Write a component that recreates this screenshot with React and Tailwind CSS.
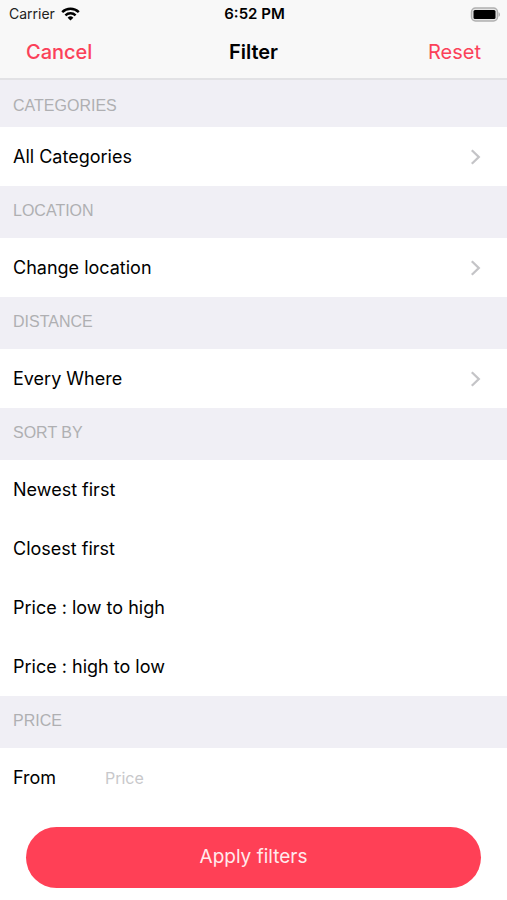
import { useState } from "react";
import { clsx } from "clsx";

const sortOptions = [
  "Newest first",
  "Closest first",
  "Price : low to high",
  "Price : high to low",
];

function StatusBar() {
  return (
    <div className="grid grid-cols-3 items-center h-7 pl-[9px] pr-[7px] text-sm text-[#222]">
      <div className="flex items-center gap-[6px]">
        <span>Carrier</span>
        <svg width="19" height="14" viewBox="0 0 19 14" fill="none" stroke="#000">
          <path d="M1.2 5.1a11.9 11.9 0 0 1 16.6 0" strokeWidth="2.5" />
          <path d="M4.4 8.3a7.3 7.3 0 0 1 10.2 0" strokeWidth="2.4" />
          <path d="M9.5 13.6 6.6 10.7a4.1 4.1 0 0 1 5.8 0z" fill="#000" stroke="none" />
        </svg>
      </div>
      <span className="text-center text-[15px] font-semibold text-black">
        6:52 PM
      </span>
      <svg className="justify-self-end" width="30" height="15" viewBox="0 0 30 15">
        <rect x="1.5" y="1" width="26" height="13" rx="4" fill="#e4e4e4" stroke="#b0b0b0" strokeWidth="1.5" />
        <rect x="3.5" y="3" width="22" height="9" rx="1.5" fill="#000" />
        <path d="M28.6 5.2c1.7.7 1.7 3.9 0 4.6z" fill="#a8a8a8" />
      </svg>
    </div>
  );
}

function SectionHeader({ title, first }) {
  return (
    <h2
      className={clsx(
        "flex items-center px-[13px] bg-[#f0eff5] text-base leading-6 text-[#afafb2]",
        "font-['Liberation_Sans',Arial,sans-serif]",
        first ? "h-[47px] pt-1" : "h-[52px] pb-[2px]"
      )}
    >
      {title}
    </h2>
  );
}

function LinkRow({ label }) {
  return (
    <button
      type="button"
      className="flex w-full items-center justify-between h-[59px] pl-[13px] pr-[26px] text-left text-lg"
    >
      {label}
      <svg width="11" height="16" viewBox="0 0 11 16" fill="none" stroke="#c4c4c7" strokeWidth="2.3">
        <path d="M1.8 1.2 8.8 8l-7 6.8" />
      </svg>
    </button>
  );
}

export default function App() {
  const [sort, setSort] = useState("");
  const [price, setPrice] = useState("");

  const handleReset = () => {
    setSort("");
    setPrice("");
  };

  return (
    <div className="min-h-screen bg-white text-black font-['Inter',sans-serif]">
      <header className="bg-[#f8f8f8] border-b-2 border-[#e2e2e5]">
        <StatusBar />
        <div className="grid grid-cols-3 items-center h-[50px] px-[26px] pb-[2px] text-xl">
          <button type="button" className="justify-self-start font-medium text-[#fb4159]">
            Cancel
          </button>
          <h1 className="text-center font-semibold">Filter</h1>
          <button
            type="button"
            onClick={handleReset}
            className="justify-self-end text-[#fb4159]"
          >
            Reset
          </button>
        </div>
      </header>

      <main>
        <SectionHeader title="CATEGORIES" first />
        <LinkRow label="All Categories" />

        <SectionHeader title="LOCATION" />
        <LinkRow label="Change location" />

        <SectionHeader title="DISTANCE" />
        <LinkRow label="Every Where" />

        <SectionHeader title="SORT BY" />
        {sortOptions.map((option) => (
          <label
            key={option}
            className="relative flex items-center h-[59px] px-[13px] text-lg cursor-pointer has-checked:text-[#fb4159]"
          >
            <input
              type="radio"
              name="sort"
              className="sr-only"
              checked={sort === option}
              onChange={() => setSort(option)}
            />
            {option}
          </label>
        ))}

        <SectionHeader title="PRICE" />
        <div className="flex items-center h-[59px] px-[13px] text-lg">
          <label htmlFor="price-from" className="w-[92px]">
            From
          </label>
          <input
            id="price-from"
            type="text"
            inputMode="numeric"
            placeholder="Price"
            value={price}
            onChange={(e) => setPrice(e.target.value)}
            className="flex-1 min-w-0 text-base outline-none placeholder:text-[#c8c8cb]"
          />
        </div>
      </main>

      <div className="px-[26px] pt-5 pb-3">
        <button
          type="button"
          className="w-full h-[61px] rounded-full bg-[#ff4056] text-[19px] text-[#ffeaec]"
        >
          Apply filters
        </button>
      </div>
    </div>
  );
}
